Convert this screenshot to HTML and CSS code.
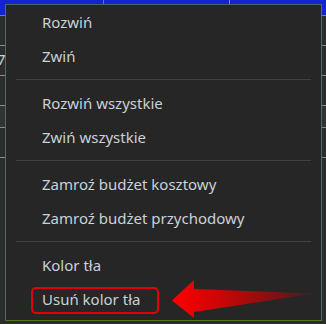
FILE: index.html
```html
<!DOCTYPE html>
<html>
<head>
<meta charset="utf-8">
<link rel="stylesheet" href="styles.css">
</head>
<body>
<div class="sheet">
  <div class="header">
    <div class="hcell c1"></div>
    <div class="hcell c2"></div>
    <div class="hcell c3"></div>
  </div>
  <div class="rows">
    <div class="row r1"></div>
    <div class="row r2"><span class="digit">7</span></div>
    <div class="row r3"></div>
    <div class="row r4"></div>
    <div class="row r5"></div>
  </div>
</div>

<div class="menu">
  <div class="item">Rozwiń</div>
  <div class="item">Zwiń</div>
  <div class="sep"></div>
  <div class="item">Rozwiń wszystkie</div>
  <div class="item">Zwiń wszystkie</div>
  <div class="sep"></div>
  <div class="item">Zamroź budżet kosztowy</div>
  <div class="item">Zamroź budżet przychodowy</div>
  <div class="sep"></div>
  <div class="item">Kolor tła</div>
  <div class="item">Usuń kolor tła</div>
</div>

<div class="highlight"></div>
<svg class="arrow" width="326" height="324" viewBox="0 0 326 324">
  <defs>
    <linearGradient id="g" x1="172" y1="0" x2="316" y2="0" gradientUnits="userSpaceOnUse">
      <stop offset="0" stop-color="#ff0000"/>
      <stop offset="0.35" stop-color="#c80606"/>
      <stop offset="0.75" stop-color="#7a1212"/>
      <stop offset="1" stop-color="#3a2222" stop-opacity="0.6"/>
    </linearGradient>
  </defs>
  <polygon points="172,300.5 194,280 194,289 315,293.5 194,312 194,318" fill="url(#g)"/>
</svg>
</body>
</html>
```

FILE: styles.css
```css
* { box-sizing: border-box; }
html, body { margin: 0; padding: 0; }
body {
  width: 326px;
  height: 324px;
  overflow: hidden;
  background: #2c2c2c;
  position: relative;
  font-family: "Noto Sans", "Open Sans", sans-serif;
}
.sheet { width: 326px; height: 324px; }
.header {
  height: 16px;
  background: #1324cf;
  display: flex;
  border-bottom: 1px solid #5da21e;
}
.hcell { height: 100%; }
.c1 { width: 104px; border-right: 1px solid #5a8c6a; }
.c2 { width: 126px; border-right: 1px solid #8a8fa0; }
.c3 { flex: 1; }
.rows { display: flex; flex-direction: column; }
.row { border-bottom: 1px solid #8a8a8a; position: relative; }
.r1 { height: 30px; }
.r2 { height: 30px; }
.r3 { height: 30px; }
.r4 { height: 22px; background: #333333; }
.r5 { height: 30px; }
.digit {
  color: #d0d0d0;
  font-size: 15px;
  position: absolute;
  left: -3px;
  top: 3px;
}
.menu {
  position: absolute;
  left: 5px;
  top: 4px;
  width: 317px;
  height: 317px;
  background: #262626;
  border: 1px solid #4b7a22;
  border-top-color: #3f6a5a;
  display: flex;
  flex-direction: column;
}
.item {
  height: 34px;
  line-height: 34px;
  padding-left: 36px;
  color: #c9d1d9;
  font-size: 15px;
  white-space: nowrap;
}
.sep {
  height: 13px;
  display: flex;
  align-items: center;
  padding-left: 10px;
  padding-right: 10px;
}
.sep::before {
  content: "";
  display: block;
  width: 100%;
  height: 1px;
  background: #414141;
}
.highlight {
  position: absolute;
  left: 31px;
  top: 287px;
  width: 128px;
  height: 27px;
  border: 2px solid #e0000a;
  border-radius: 5px;
}
.arrow {
  position: absolute;
  left: 0;
  top: 0;
}
```
